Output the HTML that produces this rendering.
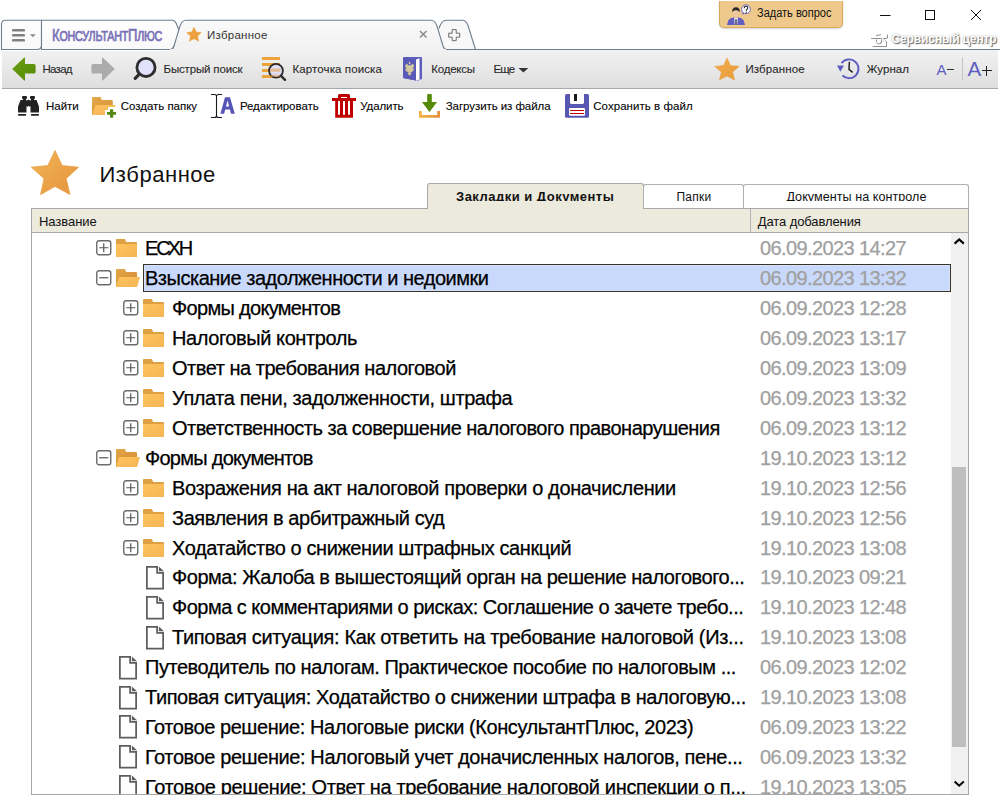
<!DOCTYPE html>
<html><head><meta charset="utf-8">
<style>
*{margin:0;padding:0;box-sizing:border-box}
html,body{width:1000px;height:800px;overflow:hidden;background:#fff;font-family:"Liberation Sans",sans-serif;color:#000}
.a{position:absolute}
.t{position:absolute;white-space:nowrap;line-height:1}
.row{position:absolute;left:32px;width:918px;height:30px}
.nm{position:absolute;top:5px;font-size:20px;letter-spacing:-0.55px;line-height:20px;white-space:nowrap;color:#000;-webkit-text-stroke:0.25px #000}
.dt{position:absolute;left:728px;top:5px;font-size:20px;letter-spacing:-0.6px;line-height:20px;color:#a0a0a0;white-space:nowrap;-webkit-text-stroke:0.25px #a0a0a0}
</style></head><body>
<svg class="a" style="left:0;top:0" width="1000" height="51">
<defs>
 <linearGradient id="ag" x1="0" y1="0" x2="0" y2="1"><stop offset="0" stop-color="#fafafa"/><stop offset="1" stop-color="#f1f1f1"/></linearGradient>
 <linearGradient id="ig" x1="0" y1="0" x2="0" y2="1"><stop offset="0" stop-color="#fefefe"/><stop offset="1" stop-color="#f9f9f9"/></linearGradient>
</defs>

<path d="M1.5 49.5 V24.5 Q1.5 20.3 5.5 20.3 H41.5 V45 Q41.5 49.5 37 49.5 Z" fill="url(#ig)" stroke="#6f7f8f" stroke-width="1.1"/>
<path d="M41.5 49.5 V20.3 H172.5 Q175 20.3 176.5 24 L180 33 L174 46 Q173 49.5 170 49.5 Z" fill="url(#ig)" stroke="#6f7f8f" stroke-width="1.1"/>
<path d="M436 49.5 L440 27 Q442 20.3 446 20.3 H462 Q466 20.3 468 25.5 L475.5 49.5 Z" fill="#f8f8f8"/>
<path d="M439 28.5 Q441.5 20.3 446 20.3 H462.5 Q466 20.3 468 25.5 L475.5 49.5" fill="none" stroke="#6f7f8f" stroke-width="1.1"/>
<path d="M166 51 L168 49.5 H171 Q173 49.5 174 46 L180 26 Q182 20.3 186 20.3 H431 Q435 20.3 437 26 L443 46 Q444 49.5 447 49.5 H450 V51 Z" fill="url(#ag)" stroke="none"/>
<path d="M168 49.5 H171 Q173 49.5 174 46 L180 26 Q182 20.3 186 20.3 H431 Q435 20.3 437 26 L443 46 Q444 49.5 447 49.5 H1000" fill="none" stroke="#6f7f8f" stroke-width="1.1"/>
<rect x="12" y="29" width="13" height="2.6" rx="1.2" fill="#808080"/>
<rect x="12" y="34" width="13" height="2.6" rx="1.2" fill="#808080"/>
<rect x="12" y="39" width="13" height="2.6" rx="1.2" fill="#808080"/>
<path d="M30 34.3 H35.8 L32.9 37.3 Z" fill="#8a8a8a"/>
<path d="M194 27.3 L196.3 32 L201.3 32.6 L197.6 36 L198.6 41.3 L194 38.7 L189.4 41.3 L190.4 36 L186.7 32.6 L191.7 32 Z" fill="#eca040" stroke="#eca040" stroke-width="0.5" stroke-linejoin="round"/>
<path d="M420 31 L426.5 37.5 M426.5 31 L420 37.5" stroke="#8a8a8a" stroke-width="1.5"/>
<path d="M452.2 29.6 H456.2 V33.2 H459.7 V37.2 H456.2 V40.7 H452.2 V37.2 H448.7 V33.2 H452.2 Z" fill="none" stroke="#6a6a6a" stroke-width="1"/>
</svg>
<div class="t" style="left:51.5px;top:27px;color:#7a72b8;font-weight:normal;-webkit-text-stroke:0.7px #7a72b8;transform:scaleX(0.77);transform-origin:0 0;letter-spacing:-0.3px"><span style="font-size:17px">К</span><span style="font-size:14px">ОНСУЛЬТАНТ</span><span style="font-size:17px">П</span><span style="font-size:14px">ЛЮС</span></div>
<div class="t" style="left:207px;top:29.5px;font-size:11.5px;font-weight:normal;color:#333;letter-spacing:0.264px;">Избранное</div>
<div class="a" style="left:719px;top:1px;width:124px;height:27px;background:#efc98b;border:1px solid #d9a95c;border-top:none;border-radius:0 0 5px 5px;box-shadow:0 1px 2px rgba(0,0,0,0.18)"></div>
<svg class="a" style="left:724px;top:3px" width="30" height="24">
<path d="M3 22 L4.2 17.8 Q5 15.6 7.5 15 L10.3 14.3 H13.7 L16.5 15 Q19 15.6 19.8 17.8 L21 22 Z" fill="#6060c2"/>
<path d="M10.2 14.5 H13.8 L13.2 22 H10.8 Z" fill="#fff"/>
<path d="M11.4 16 H12.6 L12.8 22 H11.2 Z" fill="#3a3a3a"/>
<rect x="10.8" y="12" width="2.4" height="3" fill="#e8b890"/>
<ellipse cx="12" cy="9.6" rx="3.4" ry="3.9" fill="#f1c9a0"/>
<path d="M8.4 9.8 Q7.6 4.3 12 4.3 Q16.4 4.3 15.6 9.8 Q15.2 7.2 12 7.2 Q8.8 7.2 8.4 9.8 Z" fill="#2a2a2a"/>
<path d="M17.5 11.8 L19.2 9.2 L20.8 10.4 Z" fill="#5a5ac0"/>
<circle cx="22" cy="6.3" r="4.4" fill="#fff" stroke="#5a5ac0" stroke-width="0.9"/>
<path d="M20.2 5.2 Q20.2 3.3 22 3.3 Q23.8 3.3 23.8 5 Q23.8 6.2 22.3 6.8 V7.8" fill="none" stroke="#222" stroke-width="1.1"/>
<rect x="21.7" y="8.6" width="1.2" height="1.2" fill="#222"/>
</svg>
<div class="t" style="left:757px;top:6.5px;font-size:12px;color:#111;transform:scaleX(0.917);transform-origin:0 0">Задать вопрос</div>
<svg class="a" style="left:870px;top:0" width="130" height="30">
<path d="M10 15.5 H20.5" stroke="#111" stroke-width="1"/>
<rect x="55.5" y="10.5" width="9" height="9" fill="none" stroke="#111" stroke-width="1"/>
<path d="M101 10 L111 20 M111 10 L101 20" stroke="#111" stroke-width="1"/>
</svg>
<svg class="a" style="left:865px;top:28px" width="26" height="22">
<g fill="none" stroke="#707070" stroke-width="1.4" transform="translate(0.6,0.6)">
<path d="M5.5 9.5 H21 Q22 9.5 21.5 6"/><path d="M10.5 11 V13 Q10.5 15 13 15 Q15.5 15 15.5 13 V11"/><path d="M10.5 7 Q11.5 6 15 6"/><path d="M17 10 L20.5 13.5 V17.5 H7"/>
</g>
<g fill="none" stroke="#fff" stroke-width="1.1">
<path d="M5.5 9.5 H21 Q22 9.5 21.5 6"/><path d="M10.5 11 V13 Q10.5 15 13 15 Q15.5 15 15.5 13 V11"/><path d="M10.5 7 Q11.5 6 15 6"/><path d="M17 10 L20.5 13.5 V17.5 H7"/>
</g>
</svg>
<div class="t" style="left:891.5px;top:32.8px;font-size:12px;font-weight:bold;color:#fff;letter-spacing:-0.12px;text-shadow:1px 1px 1px #666,0 0 2px #999">Сервисный центр</div>
<div class="a" style="left:2px;top:50px;width:996px;height:39px;background:linear-gradient(#f2f2f2,#dedede);border-bottom:1px solid #a9a9a9"></div>
<div class="a" style="left:170px;top:49px;width:276px;height:1px;background:#f1f1f1"></div>
<div class="a" style="left:2px;top:50px;width:168px;height:1px;background:#fff"></div>
<svg class="a" style="left:0;top:50px" width="1000" height="38">
<defs>
 <linearGradient id="gr" x1="0" y1="0" x2="1" y2="1"><stop offset="0" stop-color="#6a9e12"/><stop offset="1" stop-color="#558a08"/></linearGradient>
 <linearGradient id="st" x1="0" y1="0" x2="1" y2="1"><stop offset="0" stop-color="#f1b050"/><stop offset="1" stop-color="#e8983a"/></linearGradient>
</defs>
<path d="M12.2 19 L24.3 7.6 Q25 7 25 8 V14 H34 Q35.6 14 35.6 15.6 V22 Q35.6 23.6 34 23.6 H25 V30 Q25 31 24.3 30.4 Z" fill="url(#gr)"/>
<path d="M114.8 19 L102.7 7.6 Q102 7 102 8 V14 H93 Q91.4 14 91.4 15.6 V22 Q91.4 23.6 93 23.6 H102 V30 Q102 31 102.7 30.4 Z" fill="#ababab"/>
<circle cx="146" cy="17.4" r="9.1" fill="#e2e2fc" stroke="#2e2e2e" stroke-width="2.8"/>
<path d="M139.3 24.2 L135.2 28.3" stroke="#2e2e2e" stroke-width="3.2" stroke-linecap="round"/>
<rect x="262" y="7" width="18" height="3" fill="#eba43c"/>
<rect x="262" y="13" width="18" height="3" fill="#eba43c"/>
<rect x="262" y="19" width="18" height="3" fill="#eba43c"/>
<rect x="262" y="25" width="18" height="3" fill="#eba43c"/>
<circle cx="276" cy="20.8" r="6.9" fill="#dcdcfa" fill-opacity="0.85" stroke="#2a2a2a" stroke-width="1.8"/>
<rect x="270" y="18.6" width="10.5" height="3" fill="#e8b070" opacity="0.7"/>
<rect x="270.5" y="24.6" width="9" height="2" fill="#e8b070" opacity="0.6"/>
<path d="M281 25.8 L285 29.8" stroke="#2a2a2a" stroke-width="2.4" stroke-linecap="round"/>
<path d="M403 8 Q403 7 404 7 H421 Q422 7 422 8 V28.5 Q422 29.5 421 29.5 H419 V30.6 L416 30.6 L403 28 Z" fill="#5e5ebe"/>
<path d="M404.5 7.2 L416 10.2 V30.6 L403 28 V8.5 Z" fill="#5a5ab8"/>
<path d="M416 9.5 L419.5 8.3 V29.5 L416 30.6 Z" fill="#fff"/>
<g fill="#d4c99e">
<path d="M409.6 11 L410.6 13.5 L409.6 14.2 L408.6 13.5 Z"/>
<path d="M405 15.5 Q406 13.5 407.5 14 L408.5 17 L406.5 19 Z"/>
<path d="M414.2 15.5 Q413.2 13.5 411.7 14 L410.7 17 L412.7 19 Z"/>
<ellipse cx="409.6" cy="19" rx="2.6" ry="4"/>
<path d="M405 18 Q405.5 21.5 407.5 22 L408 20 Z"/>
<path d="M414.2 18 Q413.7 21.5 411.7 22 L411.2 20 Z"/>
<path d="M407.5 23 L409.6 26 L411.7 23 Z"/>
</g>
<path d="M518.5 18 H528.3 L523.4 22.6 Z" fill="#333"/>
<path d="M727 8 L730.5 15.6 L739.2 16.4 L732.6 22 L734.6 30 L727 26 L719.4 30 L721.4 22 L714.8 16.4 L723.5 15.6 Z" fill="url(#st)" stroke="#eaa040" stroke-width="0.6" stroke-linejoin="round"/>
<path d="M841.5 13.2 A9.4 9.4 0 1 1 842.5 25.5" fill="none" stroke="#5e5ec0" stroke-width="1.9"/>
<path d="M837 15.6 H844 L840.4 21.7 Z" fill="#5e5ec0"/>
<path d="M849.4 11.8 L849 19.3 L852.6 22.4" fill="none" stroke="#222" stroke-width="1.5"/>
<path d="M962.5 7 V30.6" stroke="#c4c4c4" stroke-width="1"/>
</svg>
<div class="t" style="left:42.5px;top:63.6px;font-size:11.5px;font-weight:normal;color:#2a2a2a;letter-spacing:-0.735px;-webkit-text-stroke:0.1px #222">Назад</div>
<div class="t" style="left:163.5px;top:63.6px;font-size:11.5px;font-weight:normal;color:#2a2a2a;letter-spacing:-0.159px;-webkit-text-stroke:0.1px #222">Быстрый поиск</div>
<div class="t" style="left:292.5px;top:63.6px;font-size:11.5px;font-weight:normal;color:#2a2a2a;letter-spacing:0.11px;-webkit-text-stroke:0.1px #222">Карточка поиска</div>
<div class="t" style="left:431.3px;top:63.6px;font-size:11.5px;font-weight:normal;color:#2a2a2a;letter-spacing:-0.226px;-webkit-text-stroke:0.1px #222">Кодексы</div>
<div class="t" style="left:493.5px;top:63.6px;font-size:11.5px;font-weight:normal;color:#2a2a2a;letter-spacing:-0.9px;-webkit-text-stroke:0.1px #222">Еще</div>
<div class="t" style="left:745.4px;top:63.6px;font-size:11.5px;font-weight:normal;color:#2a2a2a;letter-spacing:0.114px;-webkit-text-stroke:0.1px #222">Избранное</div>
<div class="t" style="left:866.8px;top:63.6px;font-size:11.5px;font-weight:normal;color:#2a2a2a;letter-spacing:0.03px;-webkit-text-stroke:0.1px #222">Журнал</div>
<div class="t" style="left:936.5px;top:61.5px;font-size:15px;color:#5e5ec0">A</div>
<div class="a" style="left:947px;top:69px;width:6.5px;height:1.2px;background:#333"></div>
<div class="t" style="left:967.5px;top:58.5px;font-size:20.5px;color:#5e5ec0">A</div>
<div class="a" style="left:982px;top:70px;width:9.5px;height:1.3px;background:#222"></div>
<div class="a" style="left:986.1px;top:66px;width:1.3px;height:9.5px;background:#222"></div>
<svg class="a" style="left:0;top:90px" width="1000" height="36">
<defs>
 <linearGradient id="fo" x1="0" y1="0" x2="1" y2="1"><stop offset="0" stop-color="#e3a84a"/><stop offset="1" stop-color="#d78f3a"/></linearGradient>
 <linearGradient id="ff" x1="0" y1="0" x2="1" y2="1"><stop offset="0" stop-color="#fbc25c"/><stop offset="1" stop-color="#f6b45a"/></linearGradient>
 <linearGradient id="tr" x1="0" y1="0" x2="1" y2="0"><stop offset="0" stop-color="#f2b446"/><stop offset="1" stop-color="#e8903e"/></linearGradient>
</defs>
<g transform="translate(12,0)" fill="#222">
<rect x="10" y="6" width="5" height="3" rx="1"/><rect x="18" y="6" width="5" height="3" rx="1"/>
<rect x="11" y="8" width="3" height="3"/><rect x="19" y="8" width="3" height="3"/>
<path d="M8.5 10 H14.5 V22.6 H6 V16.8 Z"/><path d="M18.5 10 H24.5 L27 16.8 V22.6 H18.5 Z"/>
<path d="M14 11 L16.5 9.5 L19 11 V16 L17.5 16.8 L16.5 15.8 L15.5 16.8 L14 16 Z"/>
<rect x="6" y="24" width="8.2" height="1.8" rx="0.8"/><rect x="18.8" y="24" width="8.2" height="1.8" rx="0.8"/>
</g>
<g transform="translate(88,0)">
<path d="M4 8 Q4 7 5 7 H12.5 L13.8 10 H23.6 Q24.8 10 24.8 11.3 V24.8 H4 Z" fill="url(#fo)"/>
<path d="M7.5 15 H27.6 L25 24.8 H4 Z" fill="url(#ff)"/>
<path d="M20 17 H27 V20 H30 V27 H27 V30 H20 V27 H17 V20 H20 Z" fill="#fff"/>
<path d="M22 19.2 H25.2 V22 H28 V24.8 H25.2 V27.8 H22 V24.8 H19 V22 H22 Z" fill="#558a10"/>
</g>
<g transform="translate(206,0)">
<path d="M5 4.5 H8.5 Q10.5 4.5 10.5 6.5 Q10.5 4.5 12.5 4.5 H16 M10.5 6.5 V25.5 M5 27.5 H8.5 Q10.5 27.5 10.5 25.5 Q10.5 27.5 12.5 27.5 H16" fill="none" stroke="#1a1a1a" stroke-width="1.1"/>
<path fill-rule="evenodd" d="M14.4 23.8 L19 7.2 H24 L28.8 23.8 H25 L23.9 19.6 H19.2 L18.1 23.8 Z M20 16.6 H23.1 L21.6 10.5 Z" fill="#5656b6"/>
</g>
<g transform="translate(328,0)" fill="#c00000">
<path d="M10 5.5 Q10 4 11.5 4 H20.5 Q22 4 22 5.5 V8 H19 V7 H13 V8 H10 Z"/>
<rect x="4" y="8" width="24" height="3"/>
<path fill-rule="evenodd" d="M7.2 11 H25 V27.8 H7.2 Z M10 11 V24.8 H12 V11 Z M15 11 V24.8 H17 V11 Z M20 11 V24.8 H22 V11 Z"/>
</g>
<g transform="translate(413,0)">
<path d="M14.2 5 Q14.2 4 15.2 4 H17.8 Q18.8 4 18.8 5 V12 H24 L16.5 22 L9 12 H14.2 Z" fill="#558a08"/>
<path d="M6 21 H8.8 V25 H24.2 V21 H27 V27.8 H6 Z" fill="url(#tr)"/>
</g>
<g transform="translate(560,0)">
<path d="M5 5.5 Q5 4 6.5 4 H27.5 Q29 4 29 5.5 V26.3 Q29 27.8 27.5 27.8 H6.5 Q5 27.8 5 26.3 Z" fill="#5858b2"/>
<path d="M10 4 H24 V12.6 Q24 14 22.6 14 H11.4 Q10 14 10 12.6 Z" fill="#fff"/>
<rect x="14" y="4" width="3" height="7" fill="#1a1a1a"/>
<rect x="9" y="18" width="16" height="7.8" rx="1.3" fill="#fff"/>
<path d="M10 20.5 H24 M10 23.5 H24" stroke="#c00000" stroke-width="1"/>
</g>
</svg>
<div class="t" style="left:46px;top:100.9px;font-size:11.5px;font-weight:normal;color:#000;letter-spacing:-0.023px;-webkit-text-stroke:0.1px #222">Найти</div>
<div class="t" style="left:120.8px;top:100.9px;font-size:11.5px;font-weight:normal;color:#000;letter-spacing:-0.034px;-webkit-text-stroke:0.1px #222">Создать папку</div>
<div class="t" style="left:239.9px;top:100.9px;font-size:11.5px;font-weight:normal;color:#000;letter-spacing:-0.054px;-webkit-text-stroke:0.1px #222">Редактировать</div>
<div class="t" style="left:360.2px;top:100.9px;font-size:11.5px;font-weight:normal;color:#000;letter-spacing:-0.086px;-webkit-text-stroke:0.1px #222">Удалить</div>
<div class="t" style="left:445.7px;top:100.9px;font-size:11.5px;font-weight:normal;color:#000;letter-spacing:-0.064px;-webkit-text-stroke:0.1px #222">Загрузить из файла</div>
<div class="t" style="left:593.2px;top:100.9px;font-size:11.5px;font-weight:normal;color:#000;letter-spacing:0.058px;-webkit-text-stroke:0.1px #222">Сохранить в файл</div>
<svg class="a" style="left:0;top:140px" width="100" height="60">
<defs><linearGradient id="bs" x1="0" y1="0" x2="1" y2="1"><stop offset="0" stop-color="#f2b456"/><stop offset="1" stop-color="#e5943c"/></linearGradient></defs>
<path d="M55 10.6 L62.2 25.6 L78.6 27.2 L66.2 38.6 L70 54.6 L55 46.4 L40.6 54.6 L44 38.6 L31.4 27.2 L47.8 25.6 Z" fill="url(#bs)" stroke="#eaa048" stroke-width="0.8" stroke-linejoin="round"/>
</svg>
<div class="t" style="left:99.5px;top:164.2px;font-size:22px;font-weight:normal;color:#111;letter-spacing:0.543px;">Избранное</div>
<div class="a" style="left:426.5px;top:183px;width:217px;height:26px;background:#ece9dd;border:1px solid #a8a8a8;border-bottom:none;border-radius:3px 3px 0 0"></div>
<div class="a" style="left:643px;top:183.5px;width:100.5px;height:25px;background:#fff;border:1px solid #b0b0b0;border-bottom:none;border-radius:3px 3px 0 0"></div>
<div class="a" style="left:743px;top:183.5px;width:226px;height:25px;background:#fff;border:1px solid #b0b0b0;border-bottom:none;border-radius:3px 3px 0 0"></div>
<div class="a" style="left:0;top:184px;width:1000px;height:17px;overflow:hidden">
<div class="t" style="left:456px;top:5.9px;font-size:13px;font-weight:bold;color:#111;letter-spacing:0.485px;">Закладки и Документы</div>
<div class="t" style="left:676.4px;top:6.9px;font-size:12px;font-weight:normal;color:#111;letter-spacing:0.238px;">Папки</div>
<div class="t" style="left:786.4px;top:6.9px;font-size:12.6px;font-weight:normal;color:#111;letter-spacing:0.033px;">Документы на контроле</div>
</div>
<div class="a" style="left:31px;top:208px;width:938px;height:587px;border:1px solid #a8a8a8;background:#fff"></div>
<div class="a" style="left:32px;top:209px;width:936px;height:24px;background:#ece9dd;border-bottom:1px solid #a8a8a8"></div>
<div class="a" style="left:427.5px;top:207.5px;width:215px;height:2px;background:#ece9dd"></div>
<div class="a" style="left:749.5px;top:209px;width:1px;height:23px;background:#b4b4b4"></div>
<div class="t" style="left:39px;top:215px;font-size:13px;font-weight:normal;color:#111;letter-spacing:-0.052px;">Название</div>
<div class="t" style="left:757.8px;top:215px;font-size:13px;font-weight:normal;color:#111;letter-spacing:-0.104px;">Дата добавления</div>
<div class="a" style="left:951px;top:233px;width:17px;height:561px;background:#f0f0f0"></div>
<div class="a" style="left:952px;top:467px;width:14px;height:280px;background:#bebebe"></div>
<svg class="a" style="left:951px;top:233px" width="17" height="562">
<path d="M3.6 10.6 L8.2 6.4 L12.8 10.6" stroke="#000" stroke-width="2.1" fill="none"/>
<path d="M3.6 51.5 L8.2 55.7 L12.8 51.5" stroke="#000" stroke-width="2.1" fill="none" transform="translate(0,497)"/>
</svg>
<svg width="0" height="0" style="position:absolute"><defs><linearGradient id="fg" x1="0" y1="0" x2="1" y2="1"><stop offset="0" stop-color="#fdc35c"/><stop offset="1" stop-color="#f5b555"/></linearGradient><linearGradient id="fb" x1="0" y1="0" x2="1" y2="1"><stop offset="0" stop-color="#e2a646"/><stop offset="1" stop-color="#d88f3a"/></linearGradient></defs></svg>
<div class="a" style="left:32px;top:233px;width:919px;height:561px;overflow:hidden">
<div class="row" style="left:0;top:0.0px"><svg class="a" style="left:64px;top:7px" width="16" height="16"><rect x="0.75" y="0.75" width="14" height="14" rx="2.2" fill="#fff" stroke="#6b6b6b" stroke-width="1.4"/><path d="M3.2 7.75 H12.3 M7.75 3.2 V12.3" stroke="#555" stroke-width="1.2"/></svg><svg class="a" style="left:84px;top:6px" width="22" height="19"><path d="M0 1 Q0 0 1 0 H8.8 L10.2 3 H20 Q21 3 21 4 V18 H0 Z" fill="#dda043"/><path d="M0 5 H21 V18 H0 Z" fill="url(#fg)"/></svg><div class="nm" style="left:113px;letter-spacing:-2.117px">ЕСХН</div><div class="dt">06.09.2023 14:27</div></div>
<div class="row" style="left:0;top:29.95px"><svg class="a" style="left:64px;top:7px" width="16" height="16"><rect x="0.75" y="0.75" width="14" height="14" rx="2.2" fill="#fff" stroke="#6b6b6b" stroke-width="1.4"/><path d="M3.2 7.75 H12.3" stroke="#555" stroke-width="1.2"/></svg><svg class="a" style="left:84px;top:6px" width="25" height="19"><path d="M0 1 Q0 0 1 0 H8.8 L10.2 3 H20 Q21 3 21 4 V10 H0 Z" fill="url(#fb)"/><path d="M0 4 H3 V18 H0 Z" fill="#dda043"/><path d="M3.3 8 H23.6 Q24 8 23.9 8.5 L21 18 H0 Z" fill="url(#fg)"/></svg><div class="a" style="left:111px;top:1px;width:807.5px;height:28px;background:#c9d9fb;border:1px solid #3a3428;box-shadow:inset 0 0 0 1px #d6e2fc"></div><div class="nm" style="left:113px;letter-spacing:-0.489px">Взыскание задолженности и недоимки</div><div class="dt">06.09.2023 13:32</div></div>
<div class="row" style="left:0;top:59.9px"><svg class="a" style="left:91px;top:7px" width="16" height="16"><rect x="0.75" y="0.75" width="14" height="14" rx="2.2" fill="#fff" stroke="#6b6b6b" stroke-width="1.4"/><path d="M3.2 7.75 H12.3 M7.75 3.2 V12.3" stroke="#555" stroke-width="1.2"/></svg><svg class="a" style="left:111px;top:6px" width="22" height="19"><path d="M0 1 Q0 0 1 0 H8.8 L10.2 3 H20 Q21 3 21 4 V18 H0 Z" fill="#dda043"/><path d="M0 5 H21 V18 H0 Z" fill="url(#fg)"/></svg><div class="nm" style="left:140px;letter-spacing:-0.69px">Формы документов</div><div class="dt">06.09.2023 12:28</div></div>
<div class="row" style="left:0;top:89.85px"><svg class="a" style="left:91px;top:7px" width="16" height="16"><rect x="0.75" y="0.75" width="14" height="14" rx="2.2" fill="#fff" stroke="#6b6b6b" stroke-width="1.4"/><path d="M3.2 7.75 H12.3 M7.75 3.2 V12.3" stroke="#555" stroke-width="1.2"/></svg><svg class="a" style="left:111px;top:6px" width="22" height="19"><path d="M0 1 Q0 0 1 0 H8.8 L10.2 3 H20 Q21 3 21 4 V18 H0 Z" fill="#dda043"/><path d="M0 5 H21 V18 H0 Z" fill="url(#fg)"/></svg><div class="nm" style="left:140px;letter-spacing:-0.421px">Налоговый контроль</div><div class="dt">06.09.2023 13:17</div></div>
<div class="row" style="left:0;top:119.8px"><svg class="a" style="left:91px;top:7px" width="16" height="16"><rect x="0.75" y="0.75" width="14" height="14" rx="2.2" fill="#fff" stroke="#6b6b6b" stroke-width="1.4"/><path d="M3.2 7.75 H12.3 M7.75 3.2 V12.3" stroke="#555" stroke-width="1.2"/></svg><svg class="a" style="left:111px;top:6px" width="22" height="19"><path d="M0 1 Q0 0 1 0 H8.8 L10.2 3 H20 Q21 3 21 4 V18 H0 Z" fill="#dda043"/><path d="M0 5 H21 V18 H0 Z" fill="url(#fg)"/></svg><div class="nm" style="left:140px;letter-spacing:-0.479px">Ответ на требования налоговой</div><div class="dt">06.09.2023 13:09</div></div>
<div class="row" style="left:0;top:149.75px"><svg class="a" style="left:91px;top:7px" width="16" height="16"><rect x="0.75" y="0.75" width="14" height="14" rx="2.2" fill="#fff" stroke="#6b6b6b" stroke-width="1.4"/><path d="M3.2 7.75 H12.3 M7.75 3.2 V12.3" stroke="#555" stroke-width="1.2"/></svg><svg class="a" style="left:111px;top:6px" width="22" height="19"><path d="M0 1 Q0 0 1 0 H8.8 L10.2 3 H20 Q21 3 21 4 V18 H0 Z" fill="#dda043"/><path d="M0 5 H21 V18 H0 Z" fill="url(#fg)"/></svg><div class="nm" style="left:140px;letter-spacing:-0.414px">Уплата пени, задолженности, штрафа</div><div class="dt">06.09.2023 13:32</div></div>
<div class="row" style="left:0;top:179.7px"><svg class="a" style="left:91px;top:7px" width="16" height="16"><rect x="0.75" y="0.75" width="14" height="14" rx="2.2" fill="#fff" stroke="#6b6b6b" stroke-width="1.4"/><path d="M3.2 7.75 H12.3 M7.75 3.2 V12.3" stroke="#555" stroke-width="1.2"/></svg><svg class="a" style="left:111px;top:6px" width="22" height="19"><path d="M0 1 Q0 0 1 0 H8.8 L10.2 3 H20 Q21 3 21 4 V18 H0 Z" fill="#dda043"/><path d="M0 5 H21 V18 H0 Z" fill="url(#fg)"/></svg><div class="nm" style="left:140px;letter-spacing:-0.504px">Ответственность за совершение налогового правонарушения</div><div class="dt">06.09.2023 13:12</div></div>
<div class="row" style="left:0;top:209.65px"><svg class="a" style="left:64px;top:7px" width="16" height="16"><rect x="0.75" y="0.75" width="14" height="14" rx="2.2" fill="#fff" stroke="#6b6b6b" stroke-width="1.4"/><path d="M3.2 7.75 H12.3" stroke="#555" stroke-width="1.2"/></svg><svg class="a" style="left:84px;top:6px" width="25" height="19"><path d="M0 1 Q0 0 1 0 H8.8 L10.2 3 H20 Q21 3 21 4 V10 H0 Z" fill="url(#fb)"/><path d="M0 4 H3 V18 H0 Z" fill="#dda043"/><path d="M3.3 8 H23.6 Q24 8 23.9 8.5 L21 18 H0 Z" fill="url(#fg)"/></svg><div class="nm" style="left:113px;letter-spacing:-0.73px">Формы документов</div><div class="dt">19.10.2023 13:12</div></div>
<div class="row" style="left:0;top:239.6px"><svg class="a" style="left:91px;top:7px" width="16" height="16"><rect x="0.75" y="0.75" width="14" height="14" rx="2.2" fill="#fff" stroke="#6b6b6b" stroke-width="1.4"/><path d="M3.2 7.75 H12.3 M7.75 3.2 V12.3" stroke="#555" stroke-width="1.2"/></svg><svg class="a" style="left:111px;top:6px" width="22" height="19"><path d="M0 1 Q0 0 1 0 H8.8 L10.2 3 H20 Q21 3 21 4 V18 H0 Z" fill="#dda043"/><path d="M0 5 H21 V18 H0 Z" fill="url(#fg)"/></svg><div class="nm" style="left:140px;letter-spacing:-0.372px">Возражения на акт налоговой проверки о доначислении</div><div class="dt">19.10.2023 12:56</div></div>
<div class="row" style="left:0;top:269.55px"><svg class="a" style="left:91px;top:7px" width="16" height="16"><rect x="0.75" y="0.75" width="14" height="14" rx="2.2" fill="#fff" stroke="#6b6b6b" stroke-width="1.4"/><path d="M3.2 7.75 H12.3 M7.75 3.2 V12.3" stroke="#555" stroke-width="1.2"/></svg><svg class="a" style="left:111px;top:6px" width="22" height="19"><path d="M0 1 Q0 0 1 0 H8.8 L10.2 3 H20 Q21 3 21 4 V18 H0 Z" fill="#dda043"/><path d="M0 5 H21 V18 H0 Z" fill="url(#fg)"/></svg><div class="nm" style="left:140px;letter-spacing:-0.454px">Заявления в арбитражный суд</div><div class="dt">19.10.2023 12:56</div></div>
<div class="row" style="left:0;top:299.5px"><svg class="a" style="left:91px;top:7px" width="16" height="16"><rect x="0.75" y="0.75" width="14" height="14" rx="2.2" fill="#fff" stroke="#6b6b6b" stroke-width="1.4"/><path d="M3.2 7.75 H12.3 M7.75 3.2 V12.3" stroke="#555" stroke-width="1.2"/></svg><svg class="a" style="left:111px;top:6px" width="22" height="19"><path d="M0 1 Q0 0 1 0 H8.8 L10.2 3 H20 Q21 3 21 4 V18 H0 Z" fill="#dda043"/><path d="M0 5 H21 V18 H0 Z" fill="url(#fg)"/></svg><div class="nm" style="left:140px;letter-spacing:-0.418px">Ходатайство о снижении штрафных санкций</div><div class="dt">19.10.2023 13:08</div></div>
<div class="row" style="left:0;top:329.45px"><svg class="a" style="left:114px;top:3.3px" width="19" height="25"><path d="M0.875 0.875 H11.1 V6.8 H17.125 V22.6 H0.875 Z" fill="#fff" stroke="#5e5e5e" stroke-width="1.75"/><path d="M12.9 0.4 L18 5.3 H12.9 Z" fill="#5e5e5e"/></svg><div class="nm" style="left:140px;letter-spacing:-0.471px">Форма: Жалоба в вышестоящий орган на решение налогового...</div><div class="dt">19.10.2023 09:21</div></div>
<div class="row" style="left:0;top:359.4px"><svg class="a" style="left:114px;top:3.3px" width="19" height="25"><path d="M0.875 0.875 H11.1 V6.8 H17.125 V22.6 H0.875 Z" fill="#fff" stroke="#5e5e5e" stroke-width="1.75"/><path d="M12.9 0.4 L18 5.3 H12.9 Z" fill="#5e5e5e"/></svg><div class="nm" style="left:140px;letter-spacing:-0.513px">Форма с комментариями о рисках: Соглашение о зачете требо...</div><div class="dt">19.10.2023 12:48</div></div>
<div class="row" style="left:0;top:389.35px"><svg class="a" style="left:114px;top:3.3px" width="19" height="25"><path d="M0.875 0.875 H11.1 V6.8 H17.125 V22.6 H0.875 Z" fill="#fff" stroke="#5e5e5e" stroke-width="1.75"/><path d="M12.9 0.4 L18 5.3 H12.9 Z" fill="#5e5e5e"/></svg><div class="nm" style="left:140px;letter-spacing:-0.33px">Типовая ситуация: Как ответить на требование налоговой (Из...</div><div class="dt">19.10.2023 13:08</div></div>
<div class="row" style="left:0;top:419.3px"><svg class="a" style="left:87px;top:3.3px" width="19" height="25"><path d="M0.875 0.875 H11.1 V6.8 H17.125 V22.6 H0.875 Z" fill="#fff" stroke="#5e5e5e" stroke-width="1.75"/><path d="M12.9 0.4 L18 5.3 H12.9 Z" fill="#5e5e5e"/></svg><div class="nm" style="left:113px;letter-spacing:-0.46px">Путеводитель по налогам. Практическое пособие по налоговым ...</div><div class="dt">06.09.2023 12:02</div></div>
<div class="row" style="left:0;top:449.25px"><svg class="a" style="left:87px;top:3.3px" width="19" height="25"><path d="M0.875 0.875 H11.1 V6.8 H17.125 V22.6 H0.875 Z" fill="#fff" stroke="#5e5e5e" stroke-width="1.75"/><path d="M12.9 0.4 L18 5.3 H12.9 Z" fill="#5e5e5e"/></svg><div class="nm" style="left:113px;letter-spacing:-0.409px">Типовая ситуация: Ходатайство о снижении штрафа в налоговую...</div><div class="dt">19.10.2023 13:08</div></div>
<div class="row" style="left:0;top:479.2px"><svg class="a" style="left:87px;top:3.3px" width="19" height="25"><path d="M0.875 0.875 H11.1 V6.8 H17.125 V22.6 H0.875 Z" fill="#fff" stroke="#5e5e5e" stroke-width="1.75"/><path d="M12.9 0.4 L18 5.3 H12.9 Z" fill="#5e5e5e"/></svg><div class="nm" style="left:113px;letter-spacing:-0.432px">Готовое решение: Налоговые риски (КонсультантПлюс, 2023)</div><div class="dt">06.09.2023 13:22</div></div>
<div class="row" style="left:0;top:509.15px"><svg class="a" style="left:87px;top:3.3px" width="19" height="25"><path d="M0.875 0.875 H11.1 V6.8 H17.125 V22.6 H0.875 Z" fill="#fff" stroke="#5e5e5e" stroke-width="1.75"/><path d="M12.9 0.4 L18 5.3 H12.9 Z" fill="#5e5e5e"/></svg><div class="nm" style="left:113px;letter-spacing:-0.409px">Готовое решение: Налоговый учет доначисленных налогов, пене...</div><div class="dt">06.09.2023 13:32</div></div>
<div class="row" style="left:0;top:539.1px"><svg class="a" style="left:87px;top:3.3px" width="19" height="25"><path d="M0.875 0.875 H11.1 V6.8 H17.125 V22.6 H0.875 Z" fill="#fff" stroke="#5e5e5e" stroke-width="1.75"/><path d="M12.9 0.4 L18 5.3 H12.9 Z" fill="#5e5e5e"/></svg><div class="nm" style="left:113px;letter-spacing:-0.342px">Готовое решение: Ответ на требование налоговой инспекции о п...</div><div class="dt">19.10.2023 13:05</div></div>
</div>
</body></html>
